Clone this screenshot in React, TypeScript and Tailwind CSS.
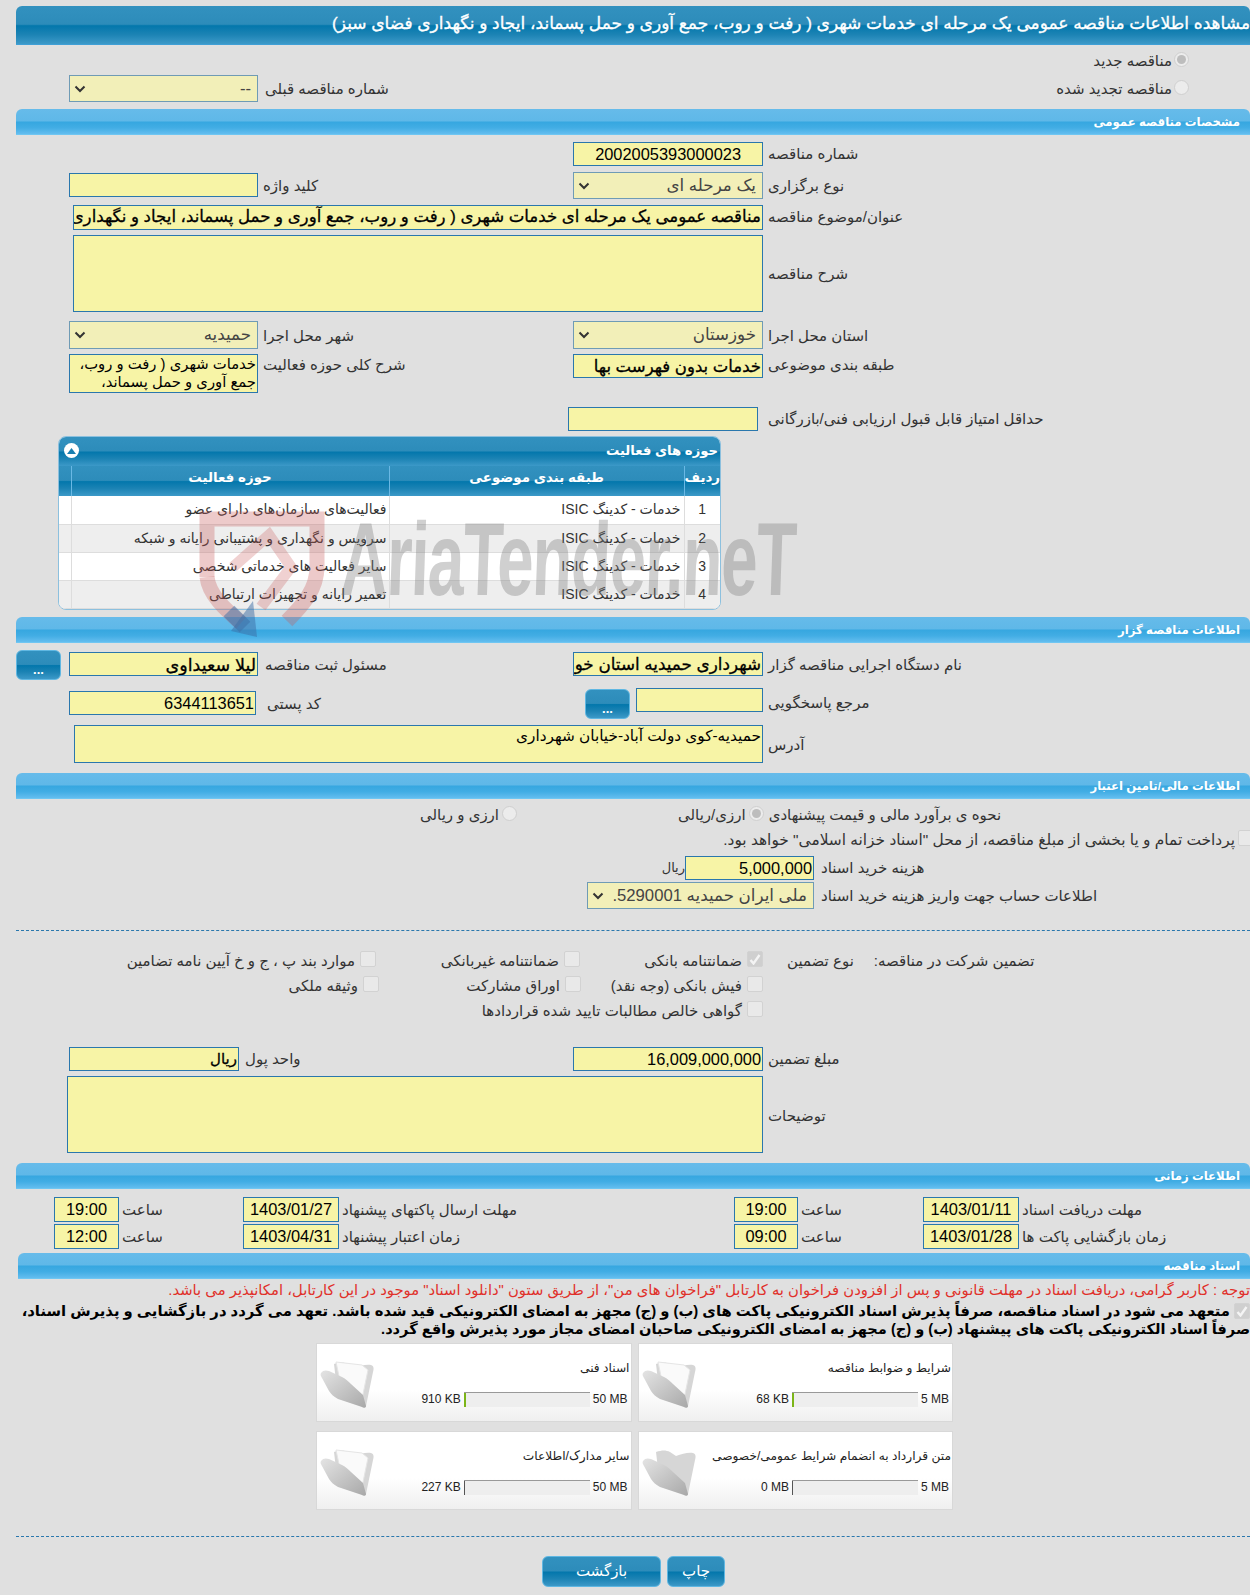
import type { ReactNode } from "react";

const HEAD_BG =
  "bg-[linear-gradient(#3291bf_0%,#2d8cba_48%,#0377ac_52%,#1c83b4_75%,#3c99c8_100%)]";
const BAR_BG =
  "bg-[linear-gradient(#66bbea_0%,#5fb8e8_48%,#36a7e0_52%,#42ade4_75%,#63bdef_100%)]";

function Lbl({
  children,
  className = "",
  size = "text-[15px]",
}: {
  children: ReactNode;
  className?: string;
  size?: string;
}) {
  return (
    <span dir="rtl" className={`whitespace-nowrap text-left leading-[22px] text-[#333] ${size} ${className}`}>
      {children}
    </span>
  );
}

// yellow read-only field
function Box({
  children,
  className = "",
  size = "text-[16.4px] leading-[22px]",
  bold = false,
  wrap = false,
}: {
  children?: ReactNode;
  className?: string;
  size?: string;
  bold?: boolean;
  wrap?: boolean;
}) {
  return (
    <div
      dir="rtl"
      className={`shrink-0 overflow-hidden border border-[#2a77ad] bg-[#f7f4a6] px-[1px] text-black ${size} ${
        wrap ? "whitespace-normal" : "whitespace-nowrap"
      } ${bold ? "[-webkit-text-stroke:0.3px_black]" : ""} ${className}`}
    >
      {children}
    </div>
  );
}

function Sel({ children, className = "" }: { children: ReactNode; className?: string }) {
  return (
    <div
      dir="rtl"
      className={`flex shrink-0 items-center justify-between border border-[#6f9bb5] bg-[#f2efb8] pl-[4px] pr-[6px] text-[16.7px] text-[#444] ${className}`}
    >
      <span className="whitespace-nowrap">{children}</span>
      <svg width="12" height="8" viewBox="0 0 12 8" fill="none" stroke="#333" strokeWidth="2">
        <path d="M1.5 1.5 6 6l4.5-4.5" />
      </svg>
    </div>
  );
}

function Bar({ title, className = "" }: { title: string; className?: string }) {
  return (
    <div
      dir="rtl"
      className={`h-[26px] rounded-t-[6px] border-b border-[#6fc6f2] ${BAR_BG} pr-[10px] text-[11.7px] font-bold leading-[25px] text-white ${className}`}
    >
      {title}
    </div>
  );
}

function Radio({ on = false }: { on?: boolean }) {
  return (
    <span className="flex h-[15px] w-[15px] shrink-0 items-center justify-center rounded-full border border-[#cfcfcf] bg-[#ececec]">
      {on && <span className="h-[9px] w-[9px] rounded-full bg-[#bdbdbd]" />}
    </span>
  );
}

function Check({ on = false }: { on?: boolean }) {
  return (
    <span
      className={`flex h-[16px] w-[16px] shrink-0 items-center justify-center rounded-[2px] border border-[#d2d2d2] ${
        on ? "bg-[#cfcfcf]" : "bg-[#e9e9e9]"
      }`}
    >
      {on && (
        <svg width="12" height="11" viewBox="0 0 12 11" fill="none" stroke="#f4f4f4" strokeWidth="2.4">
          <path d="M1.5 6 4.5 9.5 10.5 1" />
        </svg>
      )}
    </span>
  );
}

function DotsBtn({ className = "" }: { className?: string }) {
  return (
    <div
      className={`flex shrink-0 items-center justify-center rounded-[6px] border border-[#5fb7e2] ${HEAD_BG} pt-[8px] text-[13px] font-bold leading-none text-white ${className}`}
    >
      ...
    </div>
  );
}

function Folder({ empty = false }: { empty?: boolean }) {
  return (
    <svg width="54" height="50" viewBox="0 0 54 50" className="shrink-0">
      <defs>
        <linearGradient id="fold" x1="0" y1="0" x2="1" y2="1">
          <stop offset="0" stopColor="#e4e4e4" />
          <stop offset="1" stopColor="#a8a8a8" />
        </linearGradient>
      </defs>
      <path
        d="M14 3C20 1 24 1 28 3L34 7C40 5 46 3 51 4 54 5 54 8 53 11L46 45C45 47 43 47 41 45L16 20Z"
        fill="#d6d6d6"
      />
      {!empty && <path d="M16 1 42 4 48 9 42 38 20 20Z" fill="#fafafa" stroke="#e5e5e5" />}
      <path
        d="M1 12C3 9 6 9 9 10L22 16C26 18 28 20 31 23L43 34 46 45C46 47 44 47 42 46L18 38C14 36 11 33 9 30L2 17C1 15 0 14 1 12Z"
        fill="url(#fold)"
      />
    </svg>
  );
}

function DocCard({
  title,
  used,
  max,
  green = false,
  empty = false,
}: {
  title: string;
  used: string;
  max: string;
  green?: boolean;
  empty?: boolean;
}) {
  return (
    <div className="relative h-[79px] border border-[#d8d8d8] bg-[linear-gradient(#ffffff_0%,#ffffff_60%,#efefef_100%)]">
      <div className="absolute left-[3px] top-[17px]">
        <Folder empty={empty} />
      </div>
      <div dir="rtl" className="whitespace-nowrap pr-[1px] pt-[15px] text-right text-[12.2px] leading-[18px] text-[#222]">
        {title}
      </div>
      <div className="mt-[15px] flex items-center justify-end gap-[3px] pr-[3px] text-[12px] leading-[15px] text-[#222]">
        <span className="whitespace-nowrap">{used}</span>
        <div className="flex h-[15px] w-[126px] border-t border-[#999] bg-[#eeeeee]">
          <div className={`h-full ${green ? "w-[2px] bg-[#7cb518]" : "w-[1px] bg-[#555]"}`} />
        </div>
        <span className="whitespace-nowrap">{max}</span>
      </div>
    </div>
  );
}

const ROWS = [
  ["1", "فعالیت‌های سازمان‌های دارای عضو", "bg-white"],
  ["2", "سرویس و نگهداری و پشتیبانی رایانه و شبکه", "bg-[#eeeeee]"],
  ["3", "سایر فعالیت های خدماتی شخصی", "bg-white"],
  ["4", "تعمیر رایانه و تجهیزات ارتباطی", "bg-[#eeeeee]"],
];

function ActivityPanel() {
  return (
    <div className="ml-[58px] mt-[5px] h-[174px] w-[663px] overflow-hidden rounded-[8px] border border-[#8cc0de] bg-white">
      <div dir="rtl" className={`relative h-[29px] ${HEAD_BG} pr-[2px] text-[13.2px] font-bold leading-[28px] text-white`}>
        حوزه های فعالیت
        <span className="absolute left-[5px] top-[6px] flex h-[15px] w-[15px] items-center justify-center rounded-full bg-white">
          <svg width="9" height="6" viewBox="0 0 9 6">
            <path d="M4.5 0 9 6H0Z" fill="#1a7fb0" />
          </svg>
        </span>
      </div>
      <table dir="rtl" className="w-full table-fixed border-collapse text-[14px] text-[#333]">
        <colgroup>
          <col className="w-[36px]" />
          <col className="w-[295px]" />
          <col className="w-[318px]" />
          <col />
        </colgroup>
        <thead>
          <tr className={`h-[30px] ${HEAD_BG} text-[13.4px] text-white`}>
            <th className="border-l border-[#6ab8e4] pb-[5px] font-bold">ردیف</th>
            <th className="border-l border-[#6ab8e4] pb-[5px] font-bold">طبقه بندی موضوعی</th>
            <th className="border-l border-[#6ab8e4] pb-[5px] font-bold">حوزه فعالیت</th>
            <th />
          </tr>
        </thead>
        <tbody>
          {ROWS.map(([n, name, bg]) => (
            <tr key={n} className={`h-[28px] border-b border-[#dddddd] ${bg}`}>
              <td className="border-l border-[#dddddd] text-center">{n}</td>
              <td className="whitespace-nowrap border-l border-[#dddddd] pr-[3px]">خدمات - کدینگ ISIC</td>
              <td className="whitespace-nowrap border-l border-[#dddddd] pr-[2px]">{name}</td>
              <td />
            </tr>
          ))}
        </tbody>
      </table>
    </div>
  );
}

// Site watermark that sits over the table and the bar below it
function Watermark() {
  return (
    <>
      <svg
        width="150"
        height="140"
        viewBox="0 0 150 140"
        fill="none"
        className="pointer-events-none absolute left-[195px] top-[505px]"
      >
        <path d="M12 72V14H122V62C122 84 108 100 92 116" stroke="#c85a5a" strokeOpacity=".32" strokeWidth="15" />
        <path d="M38 62 74 30 96 62 66 102" stroke="#c85a5a" strokeOpacity=".28" strokeWidth="11" />
        <path d="M12 72C14 90 30 104 46 118" stroke="#c85a5a" strokeOpacity=".32" strokeWidth="15" />
        <path d="M34 106 50 122" stroke="#3b6ea5" strokeOpacity=".5" strokeWidth="15" />
        <path d="M58 96 62 132 36 126Z" fill="#3b6ea5" fillOpacity=".5" />
      </svg>
      <div className="pointer-events-none absolute left-[341px] top-[504px] origin-left scale-x-[.63] -skew-x-3 whitespace-nowrap text-[104px] font-bold leading-[110px] tracking-[-2px] text-[#777777]/35">
        AriaTender.neT
      </div>
    </>
  );
}

export default function App() {
  return (
    <div className="relative h-[1595px] w-[1250px] overflow-hidden bg-[#e0e0e0] [font-family:'Liberation_Sans','DejaVu_Sans',sans-serif]">
      <div className="pt-[6px]">
        <div
          dir="rtl"
          className={`ml-[16px] h-[39px] overflow-hidden whitespace-nowrap rounded-t-[6px] border-b border-[#3f9fd6] ${HEAD_BG} text-[17px] leading-[36px] text-white [-webkit-text-stroke:0.35px_white]`}
        >
          مشاهده اطلاعات مناقصه عمومی یک مرحله ای خدمات شهری ( رفت و روب، جمع آوری و حمل پسماند، ایجاد و نگهداری فضای سبز)
        </div>
      </div>

      <div className="flex h-[64px] justify-between">
        <div className="ml-[69px] mt-[30px] flex items-start">
          <Sel className="h-[27px] w-[189px]">--</Sel>
          <Lbl className="ml-[7px] mt-[3px]">شماره مناقصه قبلی</Lbl>
        </div>
        <div className="mr-[61px] flex flex-col items-end">
          <div className="mt-[6px] flex h-[20px] items-center gap-[2px]">
            <Lbl>مناقصه جدید</Lbl>
            <span className="-mt-[4px]"><Radio on /></span>
          </div>
          <div className="mt-[8px] flex h-[20px] items-center gap-[2px]">
            <Lbl>مناقصه تجدید شده</Lbl>
            <span className="-mt-[4px]"><Radio /></span>
          </div>
        </div>
      </div>

      <Bar title="مشخصات مناقصه عمومی" className="ml-[16px]" />

      <div className="mt-[7px] flex h-[24px] pl-[573px]">
        <Box className="h-[24px] w-[190px] pr-[21px]">2002005393000023</Box>
        <Lbl className="ml-[5px] mt-[1px]">شماره مناقصه</Lbl>
      </div>

      <div className="mt-[6px] grid h-[27px] grid-cols-[573px_1fr]">
        <div className="flex pl-[69px] pt-[1px]">
          <Box className="h-[24px] w-[189px]" />
          <Lbl className="ml-[5px] mt-[2px]">کلید واژه</Lbl>
        </div>
        <div className="flex">
          <Sel className="h-[27px] w-[190px]">یک مرحله ای</Sel>
          <Lbl className="ml-[5px] mt-[3px]">نوع برگزاری</Lbl>
        </div>
      </div>

      <div className="mt-[6px] flex h-[25px] pl-[73px]">
        <Box bold size="text-[16.6px] leading-[22px]" className="h-[25px] w-[690px]">
          مناقصه عمومی یک مرحله ای خدمات شهری ( رفت و روب، جمع آوری و حمل پسماند، ایجاد و نگهداری فضای سبز)
        </Box>
        <Lbl className="ml-[5px] mt-[1px]">عنوان/موضوع مناقصه</Lbl>
      </div>

      <div className="mt-[5px] flex h-[77px] items-center pl-[73px]">
        <Box className="h-[77px] w-[690px]" />
        <Lbl className="ml-[5px]">شرح مناقصه</Lbl>
      </div>

      <div className="mt-[9px] grid h-[28px] grid-cols-[573px_1fr]">
        <div className="flex pl-[69px]">
          <Sel className="h-[28px] w-[189px]">حمیدیه</Sel>
          <Lbl className="ml-[5px] mt-[4px]">شهر محل اجرا</Lbl>
        </div>
        <div className="flex">
          <Sel className="h-[28px] w-[190px]">خوزستان</Sel>
          <Lbl className="ml-[5px] mt-[4px]">استان محل اجرا</Lbl>
        </div>
      </div>

      <div className="mt-[5px] grid h-[39px] grid-cols-[573px_1fr]">
        <div className="flex pl-[69px]">
          <Box wrap size="text-[14.8px] leading-[18px]" className="h-[39px] w-[189px]">
            خدمات شهری ( رفت و روب، جمع آوری و حمل پسماند،
          </Box>
          <Lbl className="ml-[5px]">شرح کلی حوزه فعالیت</Lbl>
        </div>
        <div className="flex">
          <Box bold size="text-[16.5px] leading-[22px]" className="h-[24px] w-[190px]">خدمات بدون فهرست بها</Box>
          <Lbl className="ml-[5px]">طبقه بندی موضوعی</Lbl>
        </div>
      </div>

      <div className="mt-[14px] flex h-[24px] pl-[568px]">
        <Box className="h-[24px] w-[190px]" />
        <Lbl className="ml-[10px] mt-[1px]">حداقل امتیاز قابل قبول ارزیابی فنی/بازرگانی</Lbl>
      </div>

      <ActivityPanel />

      <Bar title="اطلاعات مناقصه گزار" className="ml-[16px] mt-[7px]" />

      <div className="mt-[7px] grid h-[30px] grid-cols-[573px_1fr]">
        <div className="flex pl-[16px]">
          <DotsBtn className="h-[30px] w-[45px]" />
          <Box bold size="text-[17.5px] leading-[24px]" className="ml-[8px] mt-[2px] h-[24px] w-[189px]">لیلا سعیداوی</Box>
          <Lbl className="ml-[7px] mt-[4px]">مسئول ثبت مناقصه</Lbl>
        </div>
        <div className="flex pt-[2px]">
          <Box bold size="text-[16.8px] leading-[24px]" className="h-[24px] w-[190px]">شهرداری حمیدیه استان خوزستان</Box>
          <Lbl className="ml-[5px] mt-[2px]">نام دستگاه اجرایی مناقصه گزار</Lbl>
        </div>
      </div>

      <div className="mt-[8px] grid h-[31px] grid-cols-[585px_1fr]">
        <div className="flex pl-[69px] pt-[3px]">
          <Box className="h-[24px] w-[187px]">6344113651</Box>
          <Lbl className="ml-[11px] mt-[2px]">کد پستی</Lbl>
        </div>
        <div className="flex">
          <DotsBtn className="mt-[1px] h-[30px] w-[45px]" />
          <Box className="ml-[6px] h-[24px] w-[127px]" />
          <Lbl className="ml-[5px] mt-[4px]">مرجع پاسخگویی</Lbl>
        </div>
      </div>

      <div className="mt-[6px] flex h-[38px] items-start pl-[74px]">
        <Box size="text-[15.3px] leading-[20px]" className="h-[38px] w-[689px]">حمیدیه-کوی دولت آباد-خیابان شهرداری</Box>
        <Lbl className="ml-[5px] mt-[9px]">آدرس</Lbl>
      </div>

      <Bar title="اطلاعات مالی/تامین اعتبار" className="ml-[16px] mt-[10px]" />

      <div className="mt-[5px] flex h-[22px] items-center pl-[420px]">
        <Lbl>ارزی و ریالی</Lbl>
        <span className="-mt-[4px] ml-[3px]"><Radio /></span>
        <Lbl className="ml-[161px]">ارزی/ریالی</Lbl>
        <span className="-mt-[4px] ml-[3px]"><Radio on /></span>
        <Lbl className="ml-[5px]">نحوه ی برآورد مالی و قیمت پیشنهادی</Lbl>
      </div>

      <div className="mt-[3px] flex h-[22px] items-center justify-end">
        <Lbl size="text-[15.4px]">پرداخت تمام و یا بخشی از مبلغ مناقصه، از محل "اسناد خزانه اسلامی" خواهد بود.</Lbl>
        <span className="-mr-[4px] ml-[3px] -mt-[4px]"><Check /></span>
      </div>

      <div className="mt-[5px] flex h-[24px] items-center pl-[662px]">
        <Lbl size="text-[13px]" className="w-[23px]">ریال</Lbl>
        <Box className="h-[24px] w-[129px]">5,000,000</Box>
        <Lbl className="ml-[7px]">هزینه خرید اسناد</Lbl>
      </div>

      <div className="mt-[2px] flex h-[27px] items-center pl-[587px]">
        <Sel className="h-[27px] w-[227px]">ملی ایران حمیدیه 5290001.</Sel>
        <Lbl className="ml-[7px]">اطلاعات حساب جهت واریز هزینه خرید اسناد</Lbl>
      </div>

      <div className="ml-[16px] mt-[21px] border-t border-dashed border-[#2a77ad]" />

      <div className="mt-[18px] grid h-[24px] grid-cols-[376px_204px_183px_1fr] items-center">
        <div className="flex items-center justify-end gap-[5px]">
          <Lbl>موارد بند پ ، ج و خ آیین نامه تضامین</Lbl>
          <span className="-mt-[4px]"><Check /></span>
        </div>
        <div className="flex items-center justify-end gap-[5px]">
          <Lbl>ضمانتنامه غیربانکی</Lbl>
          <span className="-mt-[4px]"><Check /></span>
        </div>
        <div className="flex items-center justify-end gap-[5px]">
          <Lbl>ضمانتنامه بانکی</Lbl>
          <span className="-mt-[4px]"><Check on /></span>
        </div>
        <div className="flex items-center">
          <Lbl className="ml-[24px]">نوع تضمین</Lbl>
          <Lbl className="ml-[20px]">تضمین شرکت در مناقصه:</Lbl>
        </div>
      </div>

      <div className="mt-[1px] grid h-[24px] grid-cols-[379px_202px_182px_1fr] items-center">
        <div className="flex items-center justify-end gap-[5px]">
          <Lbl>وثیقه ملکی</Lbl>
          <span className="-mt-[4px]"><Check /></span>
        </div>
        <div className="flex items-center justify-end gap-[5px]">
          <Lbl>اوراق مشارکت</Lbl>
          <span className="-mt-[4px]"><Check /></span>
        </div>
        <div className="flex items-center justify-end gap-[5px]">
          <Lbl>فیش بانکی (وجه نقد)</Lbl>
          <span className="-mt-[4px]"><Check /></span>
        </div>
      </div>

      <div className="mt-[1px] flex h-[24px] w-[763px] items-center justify-end gap-[5px]">
        <Lbl>گواهی خالص مطالبات تایید شده قراردادها</Lbl>
        <span className="-mt-[4px]"><Check /></span>
      </div>

      <div className="mt-[24px] grid h-[24px] grid-cols-[573px_1fr]">
        <div className="flex pl-[69px]">
          <Box bold size="text-[15px] leading-[22px]" className="h-[24px] w-[170px]">ریال</Box>
          <Lbl className="ml-[6px] mt-[1px]">واحد پول</Lbl>
        </div>
        <div className="flex">
          <Box className="h-[24px] w-[190px]">16,009,000,000</Box>
          <Lbl className="ml-[5px] mt-[1px]">مبلغ تضمین</Lbl>
        </div>
      </div>

      <div className="mt-[5px] flex h-[77px] items-center pl-[67px]">
        <Box className="h-[77px] w-[696px]" />
        <Lbl className="ml-[5px] mt-[2px]">توضیحات</Lbl>
      </div>

      <Bar title="اطلاعات زمانی" className="ml-[16px] mt-[10px]" />

      {[
        ["19:00", "1403/01/27", "مهلت ارسال پاکتهای پیشنهاد", "19:00", "1403/01/11", "مهلت دریافت اسناد"],
        ["12:00", "1403/04/31", "زمان اعتبار پیشنهاد", "09:00", "1403/01/28", "زمان بازگشایی پاکت ها"],
      ].map((r, i) => (
        <div key={r[1]} className={`flex h-[25px] pl-[54px] ${i === 0 ? "mt-[8px]" : "mt-[2px]"}`}>
          <Box className="h-[25px] w-[65px] text-center">{r[0]}</Box>
          <Lbl className="ml-[3px] mt-[2px] w-[121px]">ساعت</Lbl>
          <Box className="h-[25px] w-[96px] text-center">{r[1]}</Box>
          <Lbl className="ml-[3px] mt-[2px] w-[392px]">{r[2]}</Lbl>
          <Box className="h-[25px] w-[64px] text-center">{r[3]}</Box>
          <Lbl className="ml-[3px] mt-[2px] w-[122px]">ساعت</Lbl>
          <Box className="h-[25px] w-[96px] text-center">{r[4]}</Box>
          <Lbl className="ml-[3px] mt-[2px]">{r[5]}</Lbl>
        </div>
      ))}

      <Bar title="اسناد مناقصه" className="ml-[18px] mt-[4px]" />

      <div dir="rtl" className="mt-[1px] h-[20px] whitespace-nowrap text-[14.8px] leading-[20px] text-[#e0302a]">
        توجه : کاربر گرامی، دریافت اسناد در مهلت قانونی و پس از افزودن فراخوان به کارتابل "فراخوان های من"، از طریق ستون "دانلود اسناد" موجود در این کارتابل، امکانپذیر می باشد.
      </div>
      <div dir="rtl" className="mt-[1px] flex h-[19px] items-center gap-[4px] whitespace-nowrap pt-[1px] text-[14.8px] font-bold leading-[19px] text-black">
        <Check on />
        <span>
          متعهد می شود در اسناد مناقصه، صرفاً پذیرش اسناد الکترونیکی پاکت های (ب) و (ج) مجهز به امضای الکترونیکی قید شده باشد. تعهد می گردد در بازگشایی و پذیرش اسناد،
        </span>
      </div>
      <div dir="rtl" className="h-[19px] whitespace-nowrap text-[14.6px] font-bold leading-[19px] text-black">
        صرفاً اسناد الکترونیکی پاکت های پیشنهاد (ب) و (ج) مجهز به امضای الکترونیکی صاحبان امضای مجاز مورد پذیرش واقع گردد.
      </div>

      <div className="ml-[316px] mt-[4px] grid w-[637px] grid-cols-2 gap-x-[6px] gap-y-[9px]">
        <DocCard title="اسناد فنی" used="910 KB" max="50 MB" green />
        <DocCard title="شرایط و ضوابط مناقصه" used="68 KB" max="5 MB" green />
        <DocCard title="سایر مدارک/اطلاعات" used="227 KB" max="50 MB" />
        <DocCard title="متن قرارداد به انضمام شرایط عمومی/خصوصی" used="0 MB" max="5 MB" empty />
      </div>

      <div className="ml-[16px] mt-[26px] border-t border-dashed border-[#2a77ad]" />

      <div className="ml-[542px] mt-[19px] flex gap-[6px]">
        <div className={`flex h-[31px] w-[119px] items-center justify-center rounded-[6px] border border-[#5fb7e2] ${HEAD_BG} text-[15px] text-white`}>
          بازگشت
        </div>
        <div className={`flex h-[31px] w-[58px] items-center justify-center rounded-[6px] border border-[#5fb7e2] ${HEAD_BG} text-[15px] text-white`}>
          چاپ
        </div>
      </div>

      <Watermark />
    </div>
  );
}
